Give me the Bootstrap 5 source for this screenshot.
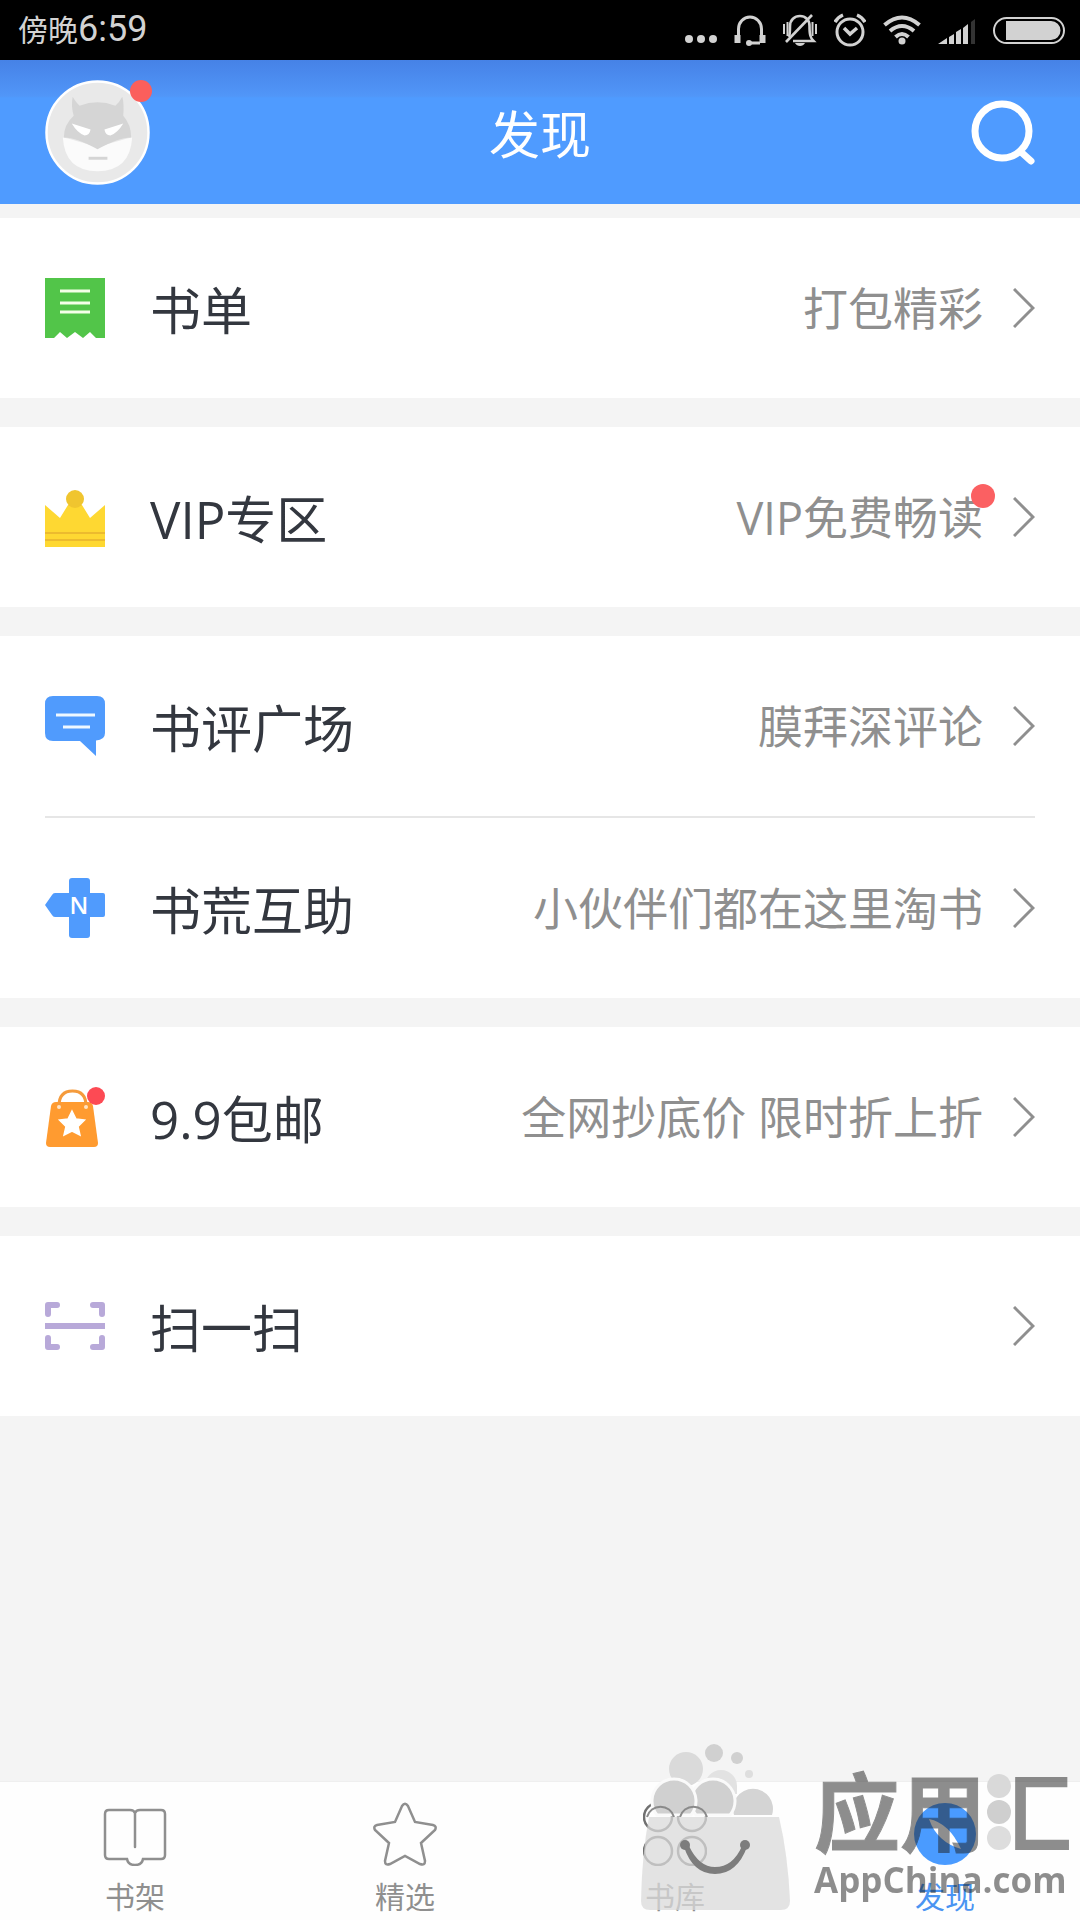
<!DOCTYPE html>
<html lang="zh-CN">
<head>
<meta charset="utf-8">
<meta name="viewport" content="width=device-width, initial-scale=1">
<title>发现</title>
<link rel="stylesheet" href="https://cdn.jsdelivr.net/npm/bootstrap@5.3.0/dist/css/bootstrap.min.css">
<style>
  body { background: #f4f4f4; font-family: "Open Sans", "Noto Sans CJK SC", sans-serif; }
  svg { display: block; flex: none; }

  .status-bar { background: #000; color: #d2d2d2; height: 60px; padding: 0 15px 0 18px; font-family: Roboto, "Noto Sans CJK SC", sans-serif; font-size: 36px; line-height: 60px; }
  .status-period { font-size: 30px; }
  .status-icons { gap: 17px; }

  .top-bar { height: 144px; padding: 0 45px; background: linear-gradient(#4682e6, #5196f8 36px, #4f9bff 38px); }
  .top-bar h1 { font-size: 51px; line-height: 60px; font-weight: 400; color: #fff; padding-top: 4px; }
  .avatar-dot { top: 0; right: -2px; }

  .menu-stack { gap: 29px; padding-top: 14px; }
  .menu-group { --bs-list-group-bg: #fff; }
  .menu-group .menu-row { height: 180px; padding: 0 45px; border: 0; color: #33373f; }
  .menu-rule { height: 2px; margin: 0 45px; background: #e6e6e6; }
  .menu-group-wrap { background: #fff; }
  .menu-label { font-size: 51px; line-height: 60px; padding: 4px 0 0 45px; }
  .menu-hint { font-size: 45px; line-height: 60px; color: #8f8f8f; padding: 2px 30px 0 0; }
  .hint-dot { top: -2px; right: 18px; }

  .tab-bar { background: #fefefe; border-top: 1px solid #efefef; }
  .tab-bar .tab-link { padding: 20px 0 4px; color: #8f8f8f; font-size: 30px; line-height: 38px; gap: 12px; }
  .tab-bar .tab-link.active { color: #4a94f2; }

  .brand-mark { right: 8px; bottom: 9px; gap: 23px; pointer-events: none; }
  .brand-text { padding-bottom: 10px; }
  .brand-words { color: #1f1f1f; opacity: .5; font-weight: 700; }
  .brand-name { font-size: 86px; line-height: 92px; -webkit-text-stroke: 1px #1f1f1f; }
  .brand-hui { color: transparent; -webkit-text-stroke: 0; background: linear-gradient(90deg, transparent 34%, #1f1f1f 34%); -webkit-background-clip: text; background-clip: text; }
  .brand-drops { right: 60px; top: 6px; }
  .brand-site { font-size: 35px; line-height: 42px; }
</style>
<script src="https://cdn.jsdelivr.net/npm/bootstrap@5.3.0/dist/js/bootstrap.bundle.min.js"></script>
</head>
<body>
<div class="d-flex flex-column min-vh-100 position-relative overflow-hidden">

  <div class="status-bar d-flex align-items-center justify-content-between">
    <div><span class="status-period">傍晚</span>6:59</div>
    <div class="status-icons d-flex align-items-center">
      <svg width="32" height="34" viewBox="0 0 32 34" fill="#d2d2d2"><circle cx="4" cy="26" r="4"/><circle cx="16" cy="26" r="4"/><circle cx="28" cy="26" r="4"/></svg>
      <svg width="32" height="34" viewBox="0 0 32 34" fill="none" stroke="#d2d2d2" stroke-width="3"><path d="M4.500 24V16a11.500 12 0 0 1 23 0v8M16 30h10"/><path d="M3.500 22v8M28.500 22v8" stroke-width="6" stroke-linecap="butt"/><circle cx="15" cy="30" r="3" fill="#d2d2d2" stroke="none"/></svg>
      <svg width="34" height="34" viewBox="0 0 34 34" fill="none" stroke="#d2d2d2" stroke-width="2.600"><path d="M10 28H30.500c-3-3-4-6-4-15 0-6-4-10-9.500-10S7 7 7 13c0 5 0 8-1 11"/><path d="M3 29L29 2"/><path d="M1 11v10M4.500 9v14M29.500 9v14M33 11v10" stroke-width="2"/><path d="M12 30h10c-2 4-8 4-10 0z" fill="#d2d2d2" stroke="none"/></svg>
      <svg width="32" height="34" viewBox="0 0 32 34" fill="none" stroke="#d2d2d2" stroke-width="3"><circle cx="16" cy="19" r="13"/><path d="M10 15l6 6 7-6M1 9q3-5 8-7M31 9q-3-5-8-7" stroke-width="3.500"/></svg>
      <svg width="38" height="34" viewBox="0 0 38 34" fill="none" stroke="#d2d2d2" stroke-width="4"><path d="M1.500 12q17.500-15 35 0M7 18q12-10 24 0M12.500 24q6.500-6 13 0"/><circle cx="19" cy="28" r="3.500" fill="#d2d2d2" stroke="none"/></svg>
      <svg width="38" height="34" viewBox="0 0 38 34" fill="#d2d2d2"><path d="M0 31l9-6v6zM11 24l5-3v10h-5zM18 19l5-3v15h-5zM25 15l5-4v20h-5z"/><path d="M33 9l4-3v25h-4z" fill="#333"/></svg>
      <svg width="72" height="34" viewBox="0 0 72 34"><rect x="1" y="5" width="70" height="25" rx="12.500" fill="none" stroke="#d2d2d2" stroke-width="2"/><path d="M13 8H58a9.500 9.500 0 0 1 0 19H13z" fill="#d2d2d2"/></svg>
    </div>
  </div>

  <header class="top-bar d-flex align-items-center justify-content-between">
    <a href="#" class="position-relative" aria-label="个人中心">
      <svg width="105" height="105" viewBox="0 0 106 106"><circle cx="53" cy="53" r="51.500" fill="#e9e9e9" stroke="#fff" stroke-width="2.500"/><path d="M18 58Q28 60 53 68Q78 60 88 58Q86 92 53 92Q20 92 18 58Z" fill="#fbfbfb"/><path d="M28 17Q32 24 35 26Q53 19 71 26Q75 23 78 17Q80 24 79 36Q87 45 87 58Q74 58 53 70Q32 58 19 58Q19 45 29 36Q26 26 28 17Z" fill="#d5d5d5"/><path d="M27 44L46 50Q45 56 40 56Q33 54 27 44ZM79 44L60 50Q61 56 66 56Q73 54 79 44Z" fill="#fff"/><path d="M44 79h19" stroke="#d5d5d5" stroke-width="3"/></svg>
      <svg class="avatar-dot position-absolute" width="22" height="22" viewBox="0 0 22 22"><circle cx="11" cy="11" r="11" fill="#fb5f5c"/></svg>
    </a>
    <h1 class="m-0">发现</h1>
    <button type="button" class="btn p-0 border-0" aria-label="搜索">
      <svg width="105" height="66" viewBox="0 0 105 66" fill="none" stroke="#fff" stroke-width="7" stroke-linecap="round"><circle cx="72" cy="32" r="27"/><path d="M91 53L101 62"/></svg>
    </button>
  </header>

  <main class="menu-stack d-flex flex-column flex-grow-1">
    <div class="menu-group list-group list-group-flush">
      <a href="#" class="menu-row list-group-item list-group-item-action d-flex align-items-center">
        <svg width="60" height="60" viewBox="0 0 60 60"><path d="M0 0H60V60H51L45 54L38 60L30 54L22 60L15 54L9 60H0Z" fill="#52c549"/><path d="M15 13H45M15 25H45M15 34H45" stroke="#f4ffe8" stroke-width="3"/></svg>
        <span class="menu-label">书单</span>
        <span class="menu-hint ms-auto">打包精彩</span>
        <svg width="22" height="40" viewBox="0 0 22 40" fill="none" stroke="#8f8f8f" stroke-width="3"><path d="M1 1L20 20L1 39"/></svg>
      </a>
    </div>

    <div class="menu-group list-group list-group-flush">
      <a href="#" class="menu-row list-group-item list-group-item-action d-flex align-items-center">
        <svg width="60" height="60" viewBox="0 0 60 60"><path d="M0 18L15 31L23 18H37L45 31L60 18V60H0Z" fill="#fed832"/><circle cx="30" cy="12" r="9" fill="#f0c52f"/><path d="M0 46H60M0 53H60" stroke="#ecbb2e" stroke-width="2"/></svg>
        <span class="menu-label">VIP专区</span>
        <span class="menu-hint ms-auto position-relative">VIP免费畅读<svg class="hint-dot position-absolute" width="24" height="24" viewBox="0 0 24 24"><circle cx="12" cy="12" r="12" fill="#fb6062"/></svg></span>
        <svg width="22" height="40" viewBox="0 0 22 40" fill="none" stroke="#8f8f8f" stroke-width="3"><path d="M1 1L20 20L1 39"/></svg>
      </a>
    </div>

    <div class="menu-group-wrap">
      <div class="menu-group list-group list-group-flush">
        <a href="#" class="menu-row list-group-item list-group-item-action d-flex align-items-center">
          <svg width="60" height="60" viewBox="0 0 60 60"><path d="M8 0H52Q60 0 60 8V37Q60 44 51 44.500V60L35 45H8Q0 45 0 37V8Q0 0 8 0Z" fill="#509bfd"/><path d="M11 19H50M18 31H45" stroke="#eef8ff" stroke-width="3"/></svg>
          <span class="menu-label">书评广场</span>
          <span class="menu-hint ms-auto">膜拜深评论</span>
          <svg width="22" height="40" viewBox="0 0 22 40" fill="none" stroke="#8f8f8f" stroke-width="3"><path d="M1 1L20 20L1 39"/></svg>
        </a>
      </div>
      <div class="menu-rule"></div>
      <div class="menu-group list-group list-group-flush">
        <a href="#" class="menu-row list-group-item list-group-item-action d-flex align-items-center">
          <svg width="60" height="60" viewBox="0 0 60 60"><g fill="#509bfd"><rect x="24" width="21" height="60" rx="3"/><path d="M10 15H58Q60 15 60 17V37Q60 39 58 39H10Q8 39 7 37L0 27L7 17Q8 15 10 15Z"/></g><text x="34" y="36" text-anchor="middle" font-family="Open Sans, sans-serif" font-weight="600" font-size="24" fill="#fff">N</text></svg>
          <span class="menu-label">书荒互助</span>
          <span class="menu-hint ms-auto">小伙伴们都在这里淘书</span>
          <svg width="22" height="40" viewBox="0 0 22 40" fill="none" stroke="#8f8f8f" stroke-width="3"><path d="M1 1L20 20L1 39"/></svg>
        </a>
      </div>
    </div>

    <div class="menu-group list-group list-group-flush">
      <a href="#" class="menu-row list-group-item list-group-item-action d-flex align-items-center">
        <svg width="60" height="60" viewBox="0 0 60 60"><path d="M11 15H43Q47 15 48 19L53 56Q53 60 49 60H5Q1 60 1 56L6 19Q7 15 11 15Z" fill="#ff9b30"/><path d="M14 19Q14 4 27.500 4Q41 4 41 19" fill="none" stroke="#f59b3c" stroke-width="3"/><circle cx="14" cy="20" r="2" fill="#ffe3c4"/><circle cx="41" cy="20" r="2" fill="#ffe3c4"/><path d="M27 24L31 32L39.500 33L33 39.500L35 48L27 44L19 48L21 39.500L14.500 33L23 32Z" fill="#fff" stroke="#fff" stroke-width="1.500"/><circle cx="51" cy="9" r="9" fill="#fd4a54"/></svg>
        <span class="menu-label">9.9包邮</span>
        <span class="menu-hint ms-auto">全网抄底价 限时折上折</span>
        <svg width="22" height="40" viewBox="0 0 22 40" fill="none" stroke="#8f8f8f" stroke-width="3"><path d="M1 1L20 20L1 39"/></svg>
      </a>
    </div>

    <div class="menu-group list-group list-group-flush">
      <a href="#" class="menu-row list-group-item list-group-item-action d-flex align-items-center">
        <svg width="60" height="60" viewBox="0 0 60 60" fill="none" stroke="#b8a9d9" stroke-width="6" stroke-linecap="round" stroke-linejoin="round"><path d="M3 18V9H12M48 9H57V18M3 42V51H12M48 51H57V42"/><path d="M0 30H60" stroke-linecap="butt"/></svg>
        <span class="menu-label">扫一扫</span>
        <svg class="ms-auto" width="22" height="40" viewBox="0 0 22 40" fill="none" stroke="#8f8f8f" stroke-width="3"><path d="M1 1L20 20L1 39"/></svg>
      </a>
    </div>
  </main>

  <nav class="tab-bar nav nav-fill flex-nowrap">
    <a href="#" class="tab-link nav-item text-decoration-none d-flex flex-column align-items-center">
      <svg width="64" height="64" viewBox="0 0 64 64" fill="none" stroke="#8f8f8f" stroke-width="2.500" stroke-linecap="round"><path d="M32 45V11Q31 8 27 8H6Q2 8 2 12V53Q2 57 6 57H24Q25 63 32 63Q39 63 40 57H58Q62 57 62 53V12Q62 8 58 8H37Q33 8 32 11"/></svg>
      <span>书架</span>
    </a>
    <a href="#" class="tab-link nav-item text-decoration-none d-flex flex-column align-items-center">
      <svg width="64" height="64" viewBox="0 0 64 64" fill="none" stroke="#8f8f8f" stroke-width="2.500"><path d="M29 4Q32-0.500 35 4L42 20L60 23Q64 24 62 28L48 41L52 59Q52 64 47 62L32 54L17 62Q12 64 12 59L16 41L2 28Q0 24 4 23L22 20Z"/></svg>
      <span>精选</span>
    </a>
    <a href="#" class="tab-link nav-item text-decoration-none d-flex flex-column align-items-center">
      <svg width="64" height="64" viewBox="0 0 64 64" fill="none" stroke="#707070" stroke-width="2.500"><circle cx="15" cy="15" r="14"/><circle cx="49" cy="15" r="14"/><circle cx="15" cy="49" r="14"/><circle cx="49" cy="49" r="14"/></svg>
      <span>书库</span>
    </a>
    <a href="#" class="tab-link nav-item text-decoration-none d-flex flex-column align-items-center active" aria-current="page">
      <svg width="64" height="64" viewBox="0 0 64 64"><circle cx="32" cy="32" r="31" fill="#4a9bff"/><path d="M16 17Q36 21 48 47Q24 40 16 17Z" fill="#fff"/></svg>
      <span>发现</span>
    </a>
  </nav>

  <div class="brand-mark position-absolute d-flex align-items-end">
    <svg width="150" height="168" viewBox="0 0 150 168">
      <g fill="#d0d0d0"><circle cx="45" cy="26" r="17" fill="#dadada"/><circle cx="73" cy="10" r="9"/><circle cx="96" cy="15" r="6"/><circle cx="108" cy="31" r="4" fill="#dedede"/><path d="M64 43a16 16 0 0 1 32 0v8H64z" fill="#e2e2e2"/></g>
      <path d="M93 72a20 20 0 1 1 38 0z" fill="#d4d4d4"/>
      <path d="M55 72a22 22 0 1 1 34 0z" fill="#d0d0d0" stroke="#fafafa" stroke-width="3"/>
      <path d="M16 72a22 22 0 1 1 34 0z" fill="#d0d0d0" stroke="#fafafa" stroke-width="3"/>
      <g fill="none" stroke="#8a8a8a" stroke-width="2"><path d="M6 74a14 14 0 0 1 27 0M39 74a14 14 0 0 1 27 0"/></g>
      <path d="M8 74H138Q147 112 149 158Q149 167 140 167H9Q0 167 0 158Q1 110 8 74Z" fill="#d9d9d9" fill-opacity=".75"/>
      <g fill="#7d7d7d"><circle cx="44" cy="102" r="5"/><circle cx="104" cy="102" r="5"/><path d="M43 104Q52 131 74 131Q96 131 106 104L101 103Q92 124 74 124Q58 124 48 103Z"/></g>
    </svg>
    <div class="brand-text position-relative">
      <svg class="brand-drops position-absolute" width="26" height="78" viewBox="0 0 26 78"><circle cx="13" cy="13" r="12" fill="#d9d9d9"/><circle cx="13" cy="39" r="12" fill="#cfcfcf"/><circle cx="13" cy="65" r="12" fill="#dddddd"/></svg>
      <div class="brand-words">
        <div class="brand-name">应用<span class="brand-hui">汇</span></div>
        <div class="brand-site">AppChina.com</div>
      </div>
    </div>
  </div>
</div>
</body>
</html>
